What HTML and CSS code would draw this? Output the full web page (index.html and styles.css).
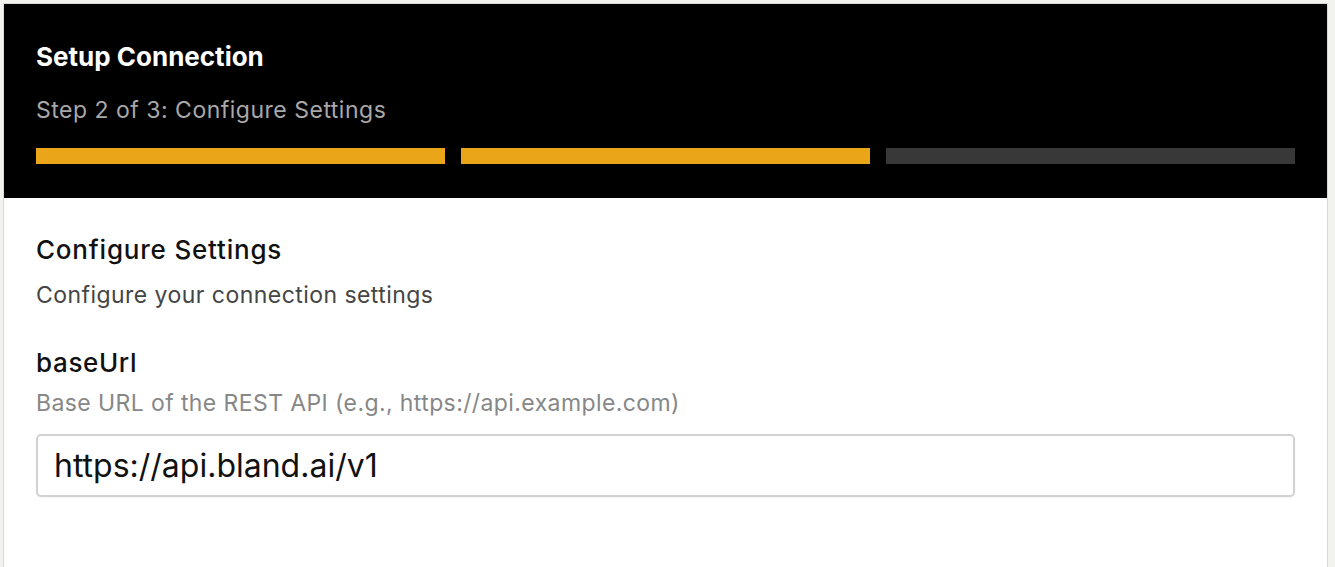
FILE: index.html
```html
<!DOCTYPE html>
<html lang="en">
<head>
<meta charset="utf-8">
<title>Setup Connection</title>
<link rel="stylesheet" href="styles.css">
</head>
<body>
<div class="card">
  <header class="card-header">
    <h1 class="title">Setup Connection</h1>
    <p class="step">Step 2 of 3: Configure Settings</p>
    <div class="progress">
      <div class="seg seg-done"></div>
      <div class="seg seg-done"></div>
      <div class="seg"></div>
    </div>
  </header>
  <section class="card-body">
    <h2 class="section-title">Configure Settings</h2>
    <p class="section-desc">Configure your connection settings</p>
    <div class="field">
      <label class="field-label" for="baseUrl">baseUrl</label>
      <p class="field-help">Base URL of the REST API (e.g., https://api.example.com)</p>
      <input class="field-input" id="baseUrl" type="text" value="https://api.bland.ai/v1">
    </div>
  </section>
</div>
</body>
</html>
```

FILE: styles.css
```css
* { box-sizing: border-box; }
html, body {
  margin: 0;
  height: 100%;
}
body {
  background: #f2f2ee;
  padding: 3px 7px 0 3px;
  font-family: Inter, "Noto Sans", sans-serif;
  overflow: hidden;
}
.card {
  background: #fff;
  border: 1px solid #d9d9d5;
  border-bottom: none;
  min-height: 100%;
}
.card-header {
  background: #000;
  padding: 37px 32px 34px;
}
.title {
  margin: 0;
  color: #fff;
  font-size: 26px;
  line-height: 32px;
  font-weight: 700;
  letter-spacing: 0;
}
.step {
  margin: 23px 0 0;
  color: #a8a8a8;
  font-size: 23px;
  line-height: 28px;
  letter-spacing: 0.5px;
}
.progress {
  margin-top: 24px;
  display: grid;
  grid-template-columns: 1fr 1fr 1fr;
  gap: 16px;
}
.seg {
  height: 16px;
  background: #383838;
}
.seg-done {
  background: #eaa519;
}
.card-body {
  padding: 36px 32px 40px;
}
.section-title {
  margin: 0;
  font-size: 26px;
  line-height: 32px;
  font-weight: 500;
  letter-spacing: 0.8px;
  color: #111;
}
.section-desc {
  margin: 15px 0 0;
  font-size: 23px;
  line-height: 28px;
  letter-spacing: 0.45px;
  color: #454545;
}
.field {
  margin-top: 38px;
  display: flex;
  flex-direction: column;
}
.field-label {
  font-size: 26px;
  line-height: 32px;
  font-weight: 500;
  letter-spacing: 0.65px;
  color: #111;
}
.field-help {
  margin: 10px 0 0;
  font-size: 23px;
  line-height: 28px;
  letter-spacing: 0.4px;
  color: #878787;
}
.field-input {
  margin-top: 17px;
  height: 63px;
  border: 2px solid #d2d2d2;
  border-radius: 5px;
  padding: 0 16px;
  font-family: inherit;
  font-size: 32px;
  color: #111;
  background: #fff;
  box-shadow: 0 1px 2px rgba(0,0,0,0.05);
  outline: none;
}
```
